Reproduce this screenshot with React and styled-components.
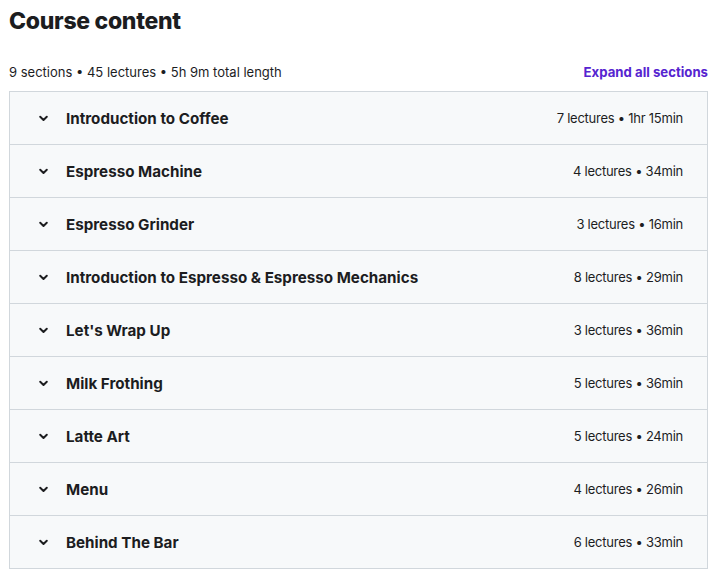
import styled, { createGlobalStyle } from "styled-components";

const GlobalStyle = createGlobalStyle`
  body {
    margin: 0;
    font-family: Inter, "Liberation Sans", sans-serif;
    color: #1c1d1f;
    background: #fff;
  }
`;

const Container = styled.div`
  padding: 6px 11px 0 9px;
`;

const Title = styled.h2`
  margin: 0;
  font-size: 23px;
  font-weight: 800;
  color: #1c1d1f;
  line-height: 30px;
  letter-spacing: -0.3px;
`;

const InfoBar = styled.div`
  display: flex;
  justify-content: space-between;
  align-items: center;
  margin-top: 26px;
  height: 20px;
  font-size: 13px;
`;

const ExpandButton = styled.button`
  border: none;
  background: none;
  padding: 0;
  font-family: inherit;
  font-size: 13.2px;
  font-weight: 700;
  color: #5624d0;
  cursor: pointer;
`;

const Sections = styled.div`
  margin-top: 9px;
  border: 1px solid #d1d7dc;
  border-top: none;
`;

const Section = styled.div`
  display: flex;
  align-items: center;
  height: 52px;
  padding: 0 24px;
  background: #f7f9fa;
  border-top: 1px solid #d1d7dc;
`;

const Chevron = styled.span`
  display: flex;
  width: 16px;
  margin-right: 16px;
  color: #1c1d1f;
`;

const SectionTitle = styled.span`
  flex: 1;
  font-size: 15.2px;
  font-weight: 700;
`;

const SectionMeta = styled.span`
  font-size: 13px;
  letter-spacing: -0.25px;
  color: #1c1d1f;
`;

const sections = [
  ["Introduction to Coffee", "7 lectures • 1hr 15min"],
  ["Espresso Machine", "4 lectures • 34min"],
  ["Espresso Grinder", "3 lectures • 16min"],
  ["Introduction to Espresso & Espresso Mechanics", "8 lectures • 29min"],
  ["Let's Wrap Up", "3 lectures • 36min"],
  ["Milk Frothing", "5 lectures • 36min"],
  ["Latte Art", "5 lectures • 24min"],
  ["Menu", "4 lectures • 26min"],
  ["Behind The Bar", "6 lectures • 33min"],
];

const ChevronIcon = () => (
  <svg width="16" height="16" viewBox="0 0 16 16">
    <path d="M6.2 6.8 L9.5 10 L12.8 6.8" fill="none" stroke="currentColor" strokeWidth="2" strokeLinecap="round" strokeLinejoin="round" />
  </svg>
);

const App = () => (
  <Container>
    <GlobalStyle />
    <Title>Course content</Title>
    <InfoBar>
      <span>9 sections • 45 lectures • 5h 9m total length</span>
      <ExpandButton>Expand all sections</ExpandButton>
    </InfoBar>
    <Sections>
      {sections.map(([title, meta]) => (
        <Section key={title}>
          <Chevron>
            <ChevronIcon />
          </Chevron>
          <SectionTitle>{title}</SectionTitle>
          <SectionMeta>{meta}</SectionMeta>
        </Section>
      ))}
    </Sections>
  </Container>
);

export default App;
